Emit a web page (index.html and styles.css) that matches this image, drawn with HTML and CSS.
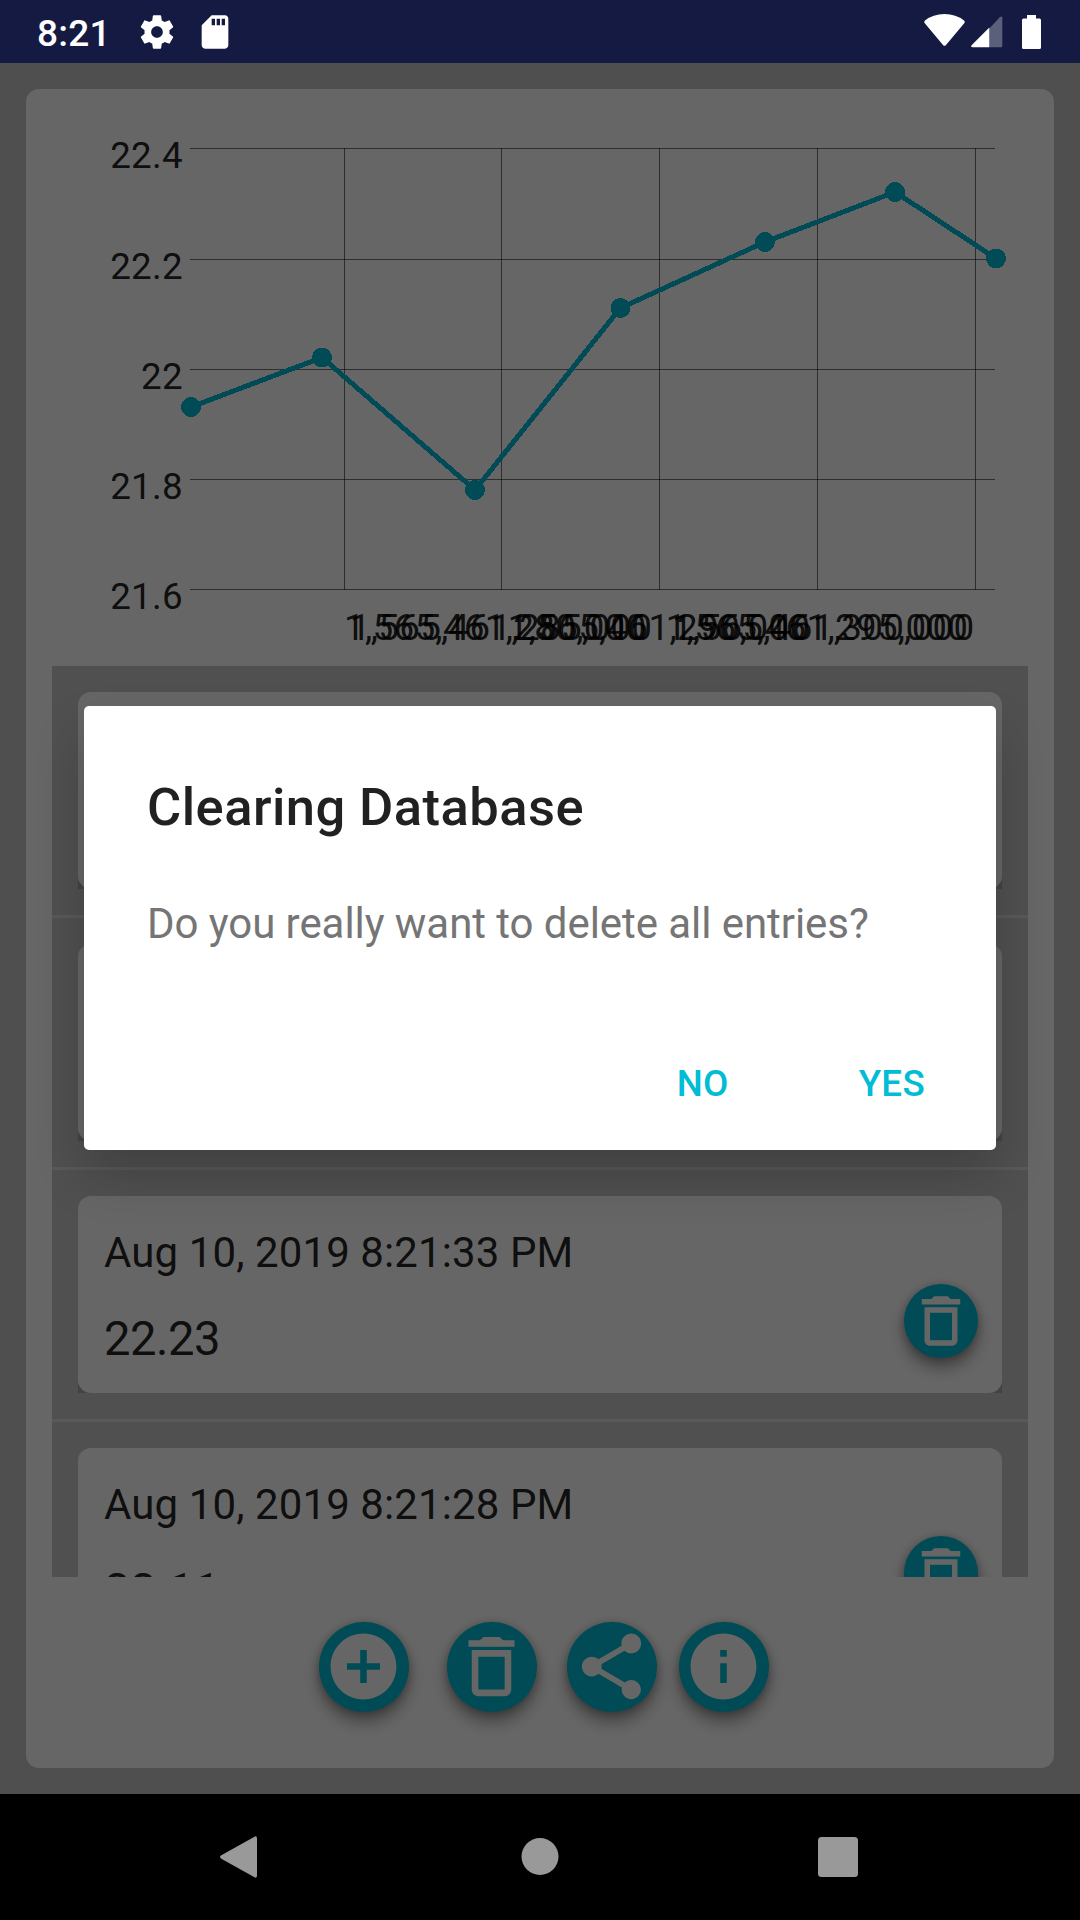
FILE: index.html
```html
<!DOCTYPE html>
<html lang="en">
<head>
<meta charset="utf-8">
<title>Clearing Database</title>
<link rel="stylesheet" href="styles.css">
</head>
<body>
<svg class="defs" aria-hidden="true">
  <symbol id="trash" viewBox="0 0 24 24"><path d="M6 19c0 1.100.9 2 2 2h8c1.100 0 2-.9 2-2V7H6v12zM8 9h8v10H8V9zm7.500-5l-1-1h-5l-1 1H5v2h14V4z"/></symbol>
</svg>
<div class="screen">
  <header class="status">
    <span class="clock">8:21</span>
    <svg class="gear" viewBox="0 0 24 24"><path d="M19.430 12.980c.04-.32.07-.64.07-.98s-.03-.66-.07-.98l2.110-1.650c.19-.15.24-.42.12-.64l-2-3.460c-.12-.22-.39-.3-.61-.22l-2.490 1c-.52-.4-1.080-.73-1.690-.98l-.38-2.650C14.460 2.180 14.250 2 14 2h-4c-.25 0-.46.18-.49.42l-.38 2.650c-.61.25-1.170.59-1.690.98l-2.490-1c-.23-.09-.49 0-.61.22l-2 3.460c-.13.22-.07.49.12.64l2.110 1.650c-.04.32-.07.65-.07.98s.03.66.07.98l-2.110 1.650c-.19.15-.24.42-.12.64l2 3.460c.12.22.39.3.61.22l2.490-1c.52.4 1.080.73 1.690.98l.38 2.650c.03.24.24.42.49.42h4c.25 0 .46-.18.49-.42l.38-2.650c.61-.25 1.170-.59 1.690-.98l2.490 1c.23.09.49 0 .61-.22l2-3.460c.12-.22.07-.49-.12-.64l-2.110-1.650zM12 15.500c-1.930 0-3.500-1.570-3.500-3.500s1.570-3.500 3.500-3.500 3.500 1.570 3.500 3.500-1.570 3.500-3.500 3.500z"/></svg>
    <svg class="sd" viewBox="0 0 24 24"><path d="M18 2h-8L4.020 8 4 20c0 1.100.9 2 2 2h12c1.100 0 2-.9 2-2V4c0-1.100-.9-2-2-2zm-6 6h-2V4h2v4zm3 0h-2V4h2v4zm3 0h-2V4h2v4z"/></svg>
    <span class="spacer"></span>
    <svg class="wifi" viewBox="0 0 41 32"><path d="M1 6.500Q9 0 20.500 0T40 6.500Q41.500 8 40 9.500L22 31q-1.500 1.700-3 0L1 9.500Q-.5 8 1 6.500z"/></svg>
    <svg class="signal" viewBox="0 0 32 32"><path d="M18.300 12.500 28.800 1.200Q31.300-.5 31.300 2V30q0 1.300-1.300 1.300H18.300z" opacity=".3"/><path d="M18.300 11.500V31.300H1.500Q-.6 31 .6 29.200z"/></svg>
    <svg class="battery" viewBox="0 0 19 34"><path d="M5 0h9v3.500h3.500Q19 3.500 19 5v27.500Q19 34 17.500 34h-16Q0 34 0 32.500V5Q0 3.500 1.500 3.500H5z"/></svg>
  </header>

  <main class="page">
    <section class="panel">
      <svg class="chart" viewBox="52 115 976 551">
        <g class="grid">
          <path d="M190 148.500H995M190 259.500H995M190 369.500H995M190 479.500H995M190 589.500H995"/>
          <path d="M344.500 148V590M501.500 148V590M659.500 148V590M817.500 148V590M975.500 148V590"/>
        </g>
        <g class="series">
          <polyline points="191,407 322,357.500 475,490 620.500,308 765,242 895,192 996,258.500"/>
          <circle cx="191" cy="407" r="10"/><circle cx="322" cy="357.500" r="10"/><circle cx="475" cy="490" r="10"/><circle cx="620.500" cy="308" r="10"/><circle cx="765" cy="242" r="10"/><circle cx="895" cy="192" r="10"/><circle cx="996" cy="258.500" r="10"/>
        </g>
        <g class="ticks-y">
          <text x="183" y="168">22.4</text>
          <text x="183" y="279">22.2</text>
          <text x="183" y="389">22</text>
          <text x="183" y="499">21.8</text>
          <text x="183" y="609">21.6</text>
        </g>
        <g class="ticks-x">
          <text class="first" x="344" y="640">1,565,461,280,000</text>
          <text x="501" y="640">1,565,461,285,000</text>
          <text x="659" y="640">1,565,461,290,000</text>
          <text x="817" y="640">1,565,461,295,000</text>
          <text class="last" x="974.500" y="640">1,565,461,300,000</text>
        </g>
      </svg>

      <ul class="list">
        <li class="item"><div class="corner"><article class="entry"></article></div></li>
        <li class="item"><div class="corner"><article class="entry"></article></div></li>
        <li class="item"><div class="corner"><article class="entry">
          <div class="reading"><time class="date">Aug 10, 2019 8:21:33 PM</time><span class="value">22.23</span></div>
          <button class="fab small" aria-label="Delete"><svg><use href="#trash"/></svg></button>
        </article></div></li>
        <li class="item"><div class="corner"><article class="entry">
          <div class="reading"><time class="date">Aug 10, 2019 8:21:28 PM</time><span class="value">22.11</span></div>
          <button class="fab small" aria-label="Delete"><svg><use href="#trash"/></svg></button>
        </article></div></li>
      </ul>

      <div class="actions">
        <button class="fab add" aria-label="Add"><svg viewBox="0 0 24 24"><path d="M12 2C6.480 2 2 6.480 2 12s4.480 10 10 10 10-4.480 10-10S17.520 2 12 2zm5 11h-4v4h-2v-4H7v-2h4V7h2v4h4v2z"/></svg></button>
        <button class="fab clear" aria-label="Clear"><svg><use href="#trash"/></svg></button>
        <button class="fab share" aria-label="Share"><svg viewBox="0 0 24 24"><path d="M18 16.080c-.76 0-1.440.3-1.960.77L8.910 12.700c.05-.23.09-.46.09-.7s-.04-.47-.09-.7l7.050-4.110c.54.5 1.250.81 2.040.81 1.660 0 3-1.340 3-3s-1.340-3-3-3-3 1.340-3 3c0 .24.04.47.09.7L8.040 9.810C7.500 9.310 6.790 9 6 9c-1.660 0-3 1.340-3 3s1.340 3 3 3c.79 0 1.500-.31 2.040-.81l7.120 4.160c-.05.21-.08.43-.08.65 0 1.610 1.310 2.920 2.920 2.920 1.610 0 2.920-1.310 2.920-2.920s-1.310-2.920-2.920-2.920z"/></svg></button>
        <button class="fab" aria-label="Info"><svg viewBox="0 0 24 24"><path d="M12 2C6.480 2 2 6.480 2 12s4.480 10 10 10 10-4.480 10-10S17.520 2 12 2zm1 15h-2v-6h2v6zm0-8h-2V7h2v2z"/></svg></button>
      </div>
    </section>
  </main>

  <nav class="navbar">
    <svg viewBox="0 0 42 42"><path d="M1.300 19.300 34.500.7Q37-.5 37 2.500v37q0 3-2.500 1.800L1.300 22.700q-2.600-1.700 0-3.400z"/></svg>
    <svg viewBox="0 0 42 42"><circle cx="21" cy="20.500" r="18.500"/></svg>
    <svg viewBox="0 0 42 42"><rect x="1" y="1" width="40" height="40" rx="3.500"/></svg>
  </nav>

  <div class="scrim">
    <div class="dialog" role="dialog">
      <h1 class="title">Clearing Database</h1>
      <p class="message">Do you really want to delete all entries?</p>
      <div class="buttons"><button class="choice">NO</button><button class="choice">YES</button></div>
    </div>
  </div>
</div>
</body>
</html>
```

FILE: styles.css
```css
* { box-sizing: border-box; }
body { margin: 0; font-family: Roboto, "Liberation Sans", sans-serif; }
button { border: 0; margin: 0; padding: 0; font: inherit; }
.defs { display: none; }
.screen { position: relative; width: 1080px; height: 1920px; display: flex; flex-direction: column; overflow: hidden; }

.status { height: 63px; flex: none; background: #141a41; color: #fff; fill: #fff; display: flex; align-items: center; padding: 0 39px 0 37px; }
.clock { font-size: 37px; font-weight: 500; line-height: 44px; letter-spacing: .2px; padding-top: 4px; width: 100px; }
.gear, .sd { width: 40px; height: 40px; }
.sd { margin-left: 18px; }
.spacer { flex: 1; }
.wifi { width: 41px; height: 32px; margin-top: -3px; }
.signal { width: 32px; height: 32px; margin-left: 6px; }
.battery { width: 19px; height: 34px; margin-left: 19px; }

.page { flex: 1; min-height: 0; background: #c5c5c5; padding: 26px; }
.panel { height: 1679px; background: #fff; border-radius: 13px; padding: 26px; display: flex; flex-direction: column; }
.chart { display: block; width: 976px; height: 551px; flex: none; overflow: visible; }
.grid { stroke: rgba(0, 0, 0, .55); stroke-width: 1; shape-rendering: crispEdges; fill: none; }
.series { fill: #00bcd4; shape-rendering: crispEdges; }
.series polyline { fill: none; stroke: #00bcd4; stroke-width: 5; }
.chart text { font-size: 36.75px; letter-spacing: .3px; fill: rgba(0, 0, 0, .87); }
.ticks-y { text-anchor: end; }
.ticks-x { text-anchor: middle; }
.ticks-x .first { text-anchor: start; }
.ticks-x .last { text-anchor: end; }

.list { list-style: none; margin: 0; padding: 0; height: 911px; flex: none; overflow: hidden; background: #c8c8c8; }
.item { height: 252px; padding: 26px 26px 0; border-bottom: 3px solid #dedede; }
.corner { height: 197px; background: linear-gradient(transparent 183px, rgba(0, 0, 0, .16) 192px); }
.entry { height: 197px; border-radius: 13px; background: #fff; display: flex; justify-content: space-between; padding: 32px 24px 0 26px; color: rgba(0, 0, 0, .87); }
.reading { display: flex; flex-direction: column; gap: 33px; }
.date { font-size: 42px; line-height: 50px; letter-spacing: .1px; }
.value { font-size: 47.25px; line-height: 56px; letter-spacing: -.5px; }

.fab { width: 90px; height: 90px; border-radius: 50%; background: #00bcd4; fill: #fff; display: flex; align-items: center; justify-content: center; flex: none; box-shadow: 0 10px 16px rgba(0, 0, 0, .36), 0 1px 9px rgba(0, 0, 0, .24); }
.fab svg { width: 79px; height: 79px; margin: 0 1px 1px 0; flex: none; }
.fab.small { width: 74px; height: 74px; margin-top: 56px; }
.fab.small svg { width: 66px; height: 66px; margin: 0; }
.actions { display: flex; padding: 45px 0 0 267px; }
.fab.add { margin-right: 38px; }
.fab.clear { margin-right: 30px; }
.fab.share { margin-right: 22px; }

.navbar { position: relative; z-index: 2; height: 126px; flex: none; background: #000; fill: #999; display: flex; justify-content: space-between; align-items: center; padding: 0 221px 0 220px; }
.navbar svg { width: 42px; height: 42px; }

.scrim { position: absolute; inset: 63px 0 126px; background: rgba(0, 0, 0, .6); padding: 643px 84px 0; }
.dialog { height: 444px; background: #fff; border-radius: 5px; padding: 70px 71px 0 63px; display: flex; flex-direction: column; box-shadow: 0 26px 50px rgba(0, 0, 0, .19); }
.title { margin: 0; font-size: 52.5px; line-height: 62px; font-weight: 500; letter-spacing: .45px; color: #212121; }
.message { margin: 61px 0 0; font-size: 42px; line-height: 50px; letter-spacing: -.06px; white-space: nowrap; color: #757575; }
.buttons { margin-top: 113px; display: flex; justify-content: flex-end; gap: 130px; }
.choice { background: none; color: #00bcd4; font-size: 36.75px; font-weight: 500; line-height: 44px; letter-spacing: .3px; }
```
